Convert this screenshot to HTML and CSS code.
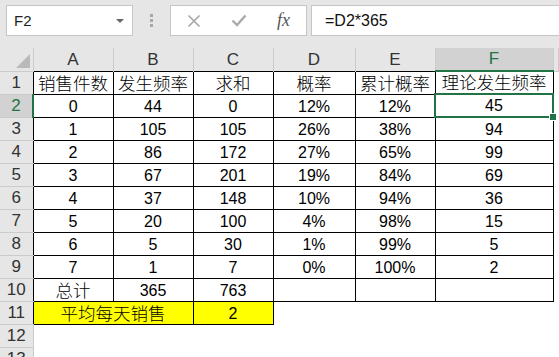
FILE: index.html
```html
<!DOCTYPE html>
<html lang="zh-CN">
<head>
  <meta charset="UTF-8">
  <title>销售频率</title>
  <link rel="stylesheet" href="styles.css">
</head>
<body>
  <div class="formula-bar">
    <div class="name-box"><span>F2</span><span class="caret"></span></div>
    <div class="grip"><i></i><i></i><i></i></div>
    <div class="fx-buttons">
      <span class="fx-btn">
        <svg width="14" height="14" viewBox="0 0 14 14"><path d="M1.5 1.5 L12.5 12.5 M12.5 1.5 L1.5 12.5" stroke="#a6a6a6" stroke-width="1.6" fill="none"/></svg>
      </span>
      <span class="fx-btn">
        <svg width="16" height="13" viewBox="0 0 16 13"><path d="M1.5 6.5 L6 11 L14.5 1.5" stroke="#aaaaaa" stroke-width="2.4" fill="none"/></svg>
      </span>
      <span class="fx-btn fx">fx</span>
    </div>
    <div class="formula">=D2*365</div>
  </div>

  <table class="sheet">
    <colgroup>
      <col style="width:33px">
      <col style="width:80px">
      <col style="width:80px">
      <col style="width:80px">
      <col style="width:82px">
      <col style="width:80px">
      <col style="width:118px">
      <col>
    </colgroup>
    <tr class="col-heads">
      <th class="corner"><span class="tri"></span></th>
      <th>A</th><th>B</th><th>C</th><th>D</th><th>E</th><th class="sel">F</th><th class="rest"></th>
    </tr>
    <tr>
      <th>1</th>
      <td class="b zh">销售件数</td><td class="b zh">发生频率</td><td class="b zh">求和</td>
      <td class="b zh">概率</td><td class="b zh">累计概率</td><td class="b zh">理论发生频率</td><td></td>
    </tr>
    <tr>
      <th class="sel-row">2</th>
      <td class="b">0</td><td class="b">44</td><td class="b">0</td>
      <td class="b">12%</td><td class="b">12%</td><td class="b active">45</td><td></td>
    </tr>
    <tr>
      <th>3</th>
      <td class="b">1</td><td class="b">105</td><td class="b">105</td>
      <td class="b">26%</td><td class="b">38%</td><td class="b">94</td><td></td>
    </tr>
    <tr>
      <th>4</th>
      <td class="b">2</td><td class="b">86</td><td class="b">172</td>
      <td class="b">27%</td><td class="b">65%</td><td class="b">99</td><td></td>
    </tr>
    <tr>
      <th>5</th>
      <td class="b">3</td><td class="b">67</td><td class="b">201</td>
      <td class="b">19%</td><td class="b">84%</td><td class="b">69</td><td></td>
    </tr>
    <tr>
      <th>6</th>
      <td class="b">4</td><td class="b">37</td><td class="b">148</td>
      <td class="b">10%</td><td class="b">94%</td><td class="b">36</td><td></td>
    </tr>
    <tr>
      <th>7</th>
      <td class="b">5</td><td class="b">20</td><td class="b">100</td>
      <td class="b">4%</td><td class="b">98%</td><td class="b">15</td><td></td>
    </tr>
    <tr>
      <th>8</th>
      <td class="b">6</td><td class="b">5</td><td class="b">30</td>
      <td class="b">1%</td><td class="b">99%</td><td class="b">5</td><td></td>
    </tr>
    <tr>
      <th>9</th>
      <td class="b">7</td><td class="b">1</td><td class="b">7</td>
      <td class="b">0%</td><td class="b">100%</td><td class="b">2</td><td></td>
    </tr>
    <tr>
      <th>10</th>
      <td class="b zh">总计</td><td class="b">365</td><td class="b">763</td>
      <td class="b"></td><td class="b"></td><td class="b"></td><td></td>
    </tr>
    <tr>
      <th>11</th>
      <td class="b zh hl" colspan="2">平均每天销售</td><td class="b hl">2</td>
      <td></td><td></td><td></td><td></td>
    </tr>
    <tr>
      <th class="edge">12</th>
      <td></td><td></td><td></td><td></td><td></td><td></td><td></td>
    </tr>
    <tr>
      <th class="edge">13</th>
      <td></td><td></td><td></td><td></td><td></td><td></td><td></td>
    </tr>
  </table>
</body>
</html>
```

FILE: styles.css
```css
body {
  margin: 0;
  background: #fff;
  font-family: "Liberation Sans", "Noto Sans CJK SC", sans-serif;
  overflow: hidden;
}

/* formula bar */
.formula-bar {
  display: flex;
  height: 48px;
  padding-top: 5px;
  box-sizing: border-box;
  background: #e6e6e6;
}

.name-box {
  margin-left: 6px;
  width: 127px;
  height: 31px;
  box-sizing: border-box;
  border: 1px solid #c6c6c6;
  background: #fff;
  display: flex;
  align-items: center;
  justify-content: space-between;
  padding: 0 8px 0 7px;
  font-size: 15px;
  color: #222;
}

.caret {
  width: 0;
  height: 0;
  border-left: 4px solid transparent;
  border-right: 4px solid transparent;
  border-top: 4px solid #666;
}

.grip {
  width: 37px;
  height: 31px;
  display: flex;
  flex-direction: column;
  align-items: center;
  justify-content: center;
  gap: 2px;
}

.grip i {
  width: 3px;
  height: 3px;
  background: #a8a8a8;
}

.fx-buttons {
  width: 137px;
  height: 31px;
  box-sizing: border-box;
  border: 1px solid #c6c6c6;
  background: #fff;
  display: flex;
  align-items: center;
}

.fx-btn {
  width: 45px;
  display: flex;
  justify-content: center;
  align-items: center;
}

.fx {
  font-family: "Liberation Serif", serif;
  font-style: italic;
  font-size: 18px;
  color: #555;
}

.formula {
  flex: 1;
  margin-left: 4px;
  height: 31px;
  box-sizing: border-box;
  border: 1px solid #c6c6c6;
  border-right: none;
  background: #fff;
  padding-left: 13px;
  font-size: 16px;
  line-height: 29px;
  color: #111;
}

/* sheet grid */
.sheet {
  border-collapse: collapse;
  table-layout: fixed;
  width: 559px;
}

.sheet tr {
  height: 23px;
}

.sheet th {
  background: #e6e6e6;
  font-weight: normal;
  font-size: 17px;
  color: #333;
  padding: 0 0 2px;
  line-height: 18px;
  vertical-align: bottom;
  border: none;
  border-bottom: 1px solid #cbcbcb;
}

.col-heads th {
  border-bottom: none;
  border-right: 1px solid #cbcbcb;
}

.col-heads th.rest,
.col-heads th.corner {
  border-bottom: 1px solid #cbcbcb;
}

.corner {
  position: relative;
}

.tri {
  position: absolute;
  right: 3px;
  bottom: 3px;
  width: 0;
  height: 0;
  border-left: 14px solid transparent;
  border-bottom: 14px solid #b9b9b9;
}

.col-heads th.sel {
  background: #d2d2d2;
  color: #217346;
  border-bottom: 2px solid #217346;
}

.sheet th.sel-row {
  background: #d2d2d2;
  color: #217346;
  border-right: 2px solid #217346;
}

.sheet th.edge {
  border-right: 1px solid #cbcbcb;
}

.sheet td {
  padding: 0 0 1px;
  text-align: center;
  vertical-align: bottom;
  font-size: 16px;
  line-height: 18px;
  color: #000;
  white-space: nowrap;
}

.sheet td.b {
  border: 1px solid #000;
}

.sheet td.zh {
  font-size: 17.5px;
  font-weight: 300;
}

.sheet td.hl {
  background: #ffff00;
}

.sheet td.active {
  border: 2px solid #217346;
  position: relative;
}

.sheet td.active::after {
  content: "";
  position: absolute;
  right: -5px;
  bottom: -5px;
  width: 6px;
  height: 6px;
  background: #217346;
  border: 1px solid #fff;
}
```
